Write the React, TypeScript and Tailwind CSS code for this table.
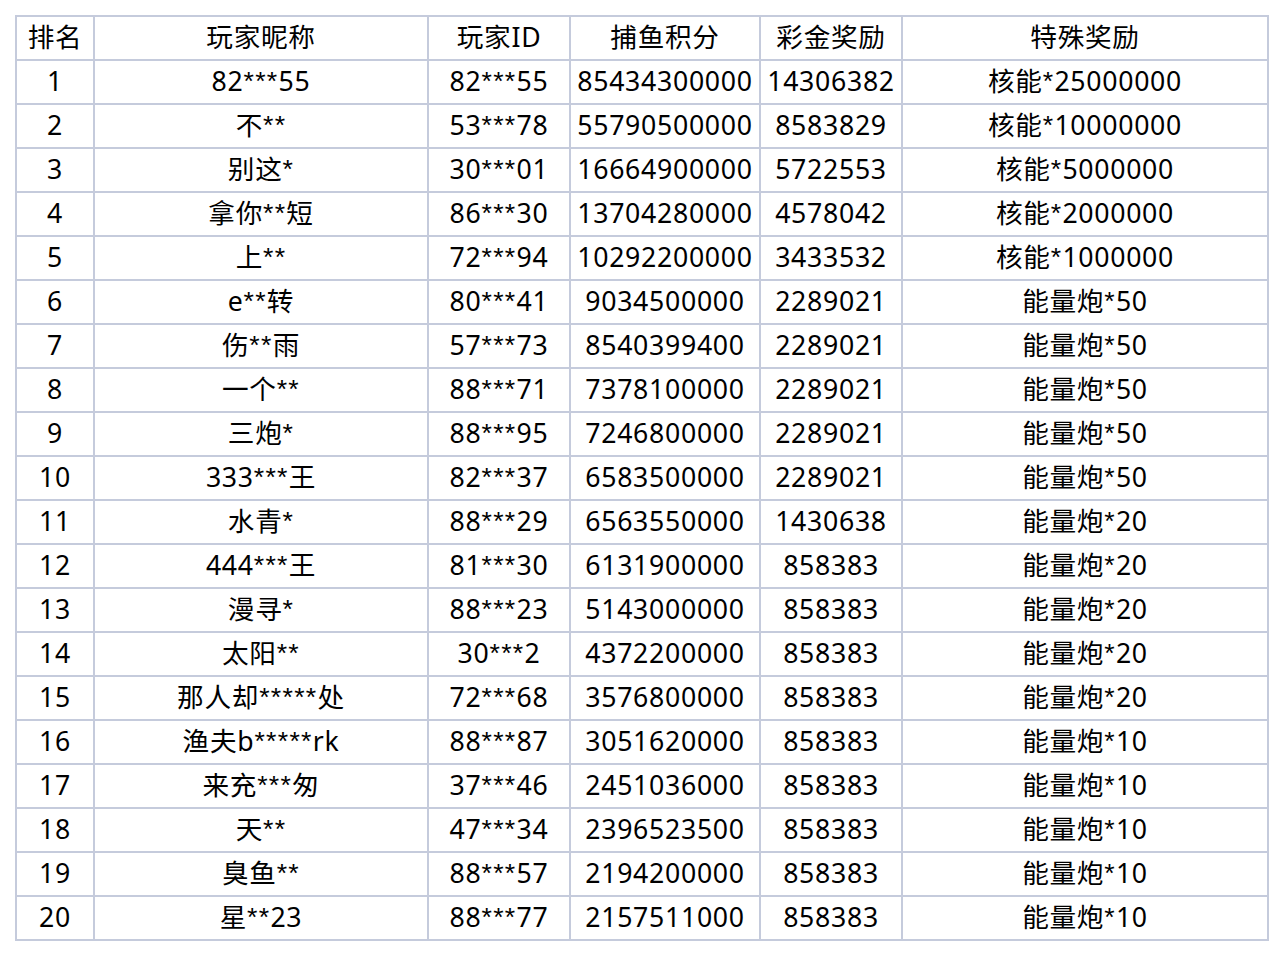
import React from "react";

const headers = ["排名", "玩家昵称", "玩家ID", "捕鱼积分", "彩金奖励", "特殊奖励"];

const rows: string[][] = [
  ["1", "82***55", "82***55", "85434300000", "14306382", "核能*25000000"],
  ["2", "不**", "53***78", "55790500000", "8583829", "核能*10000000"],
  ["3", "别这*", "30***01", "16664900000", "5722553", "核能*5000000"],
  ["4", "拿你**短", "86***30", "13704280000", "4578042", "核能*2000000"],
  ["5", "上**", "72***94", "10292200000", "3433532", "核能*1000000"],
  ["6", "e**转", "80***41", "9034500000", "2289021", "能量炮*50"],
  ["7", "伤**雨", "57***73", "8540399400", "2289021", "能量炮*50"],
  ["8", "一个**", "88***71", "7378100000", "2289021", "能量炮*50"],
  ["9", "三炮*", "88***95", "7246800000", "2289021", "能量炮*50"],
  ["10", "333***王", "82***37", "6583500000", "2289021", "能量炮*50"],
  ["11", "水青*", "88***29", "6563550000", "1430638", "能量炮*20"],
  ["12", "444***王", "81***30", "6131900000", "858383", "能量炮*20"],
  ["13", "漫寻*", "88***23", "5143000000", "858383", "能量炮*20"],
  ["14", "太阳**", "30***2", "4372200000", "858383", "能量炮*20"],
  ["15", "那人却*****处", "72***68", "3576800000", "858383", "能量炮*20"],
  ["16", "渔夫b*****rk", "88***87", "3051620000", "858383", "能量炮*10"],
  ["17", "来充***匆", "37***46", "2451036000", "858383", "能量炮*10"],
  ["18", "天**", "47***34", "2396523500", "858383", "能量炮*10"],
  ["19", "臭鱼**", "88***57", "2194200000", "858383", "能量炮*10"],
  ["20", "星**23", "88***77", "2157511000", "858383", "能量炮*10"],
];

function Cell({ text }: { text: string }) {
  const parts = text.split(/(\*+)/).filter((p) => p.length > 0);
  return (
    <>
      {parts.map((p, k) =>
        p[0] === "*" ? (
          <span
            key={k}
            className="tracking-[1.3px]"
            style={{ fontFamily: '"Liberation Sans", sans-serif' }}
          >
            {p}
          </span>
        ) : (
          <span key={k}>{p}</span>
        )
      )}
    </>
  );
}

export default function App() {
  const all = [headers, ...rows];
  return (
    <div className="w-[1284px] h-[956px] bg-white pt-[15px] pl-[15px]">
      <div
        className="inline-grid grid-cols-[76px_332px_140px_188px_140px_364px] auto-rows-[42px] gap-[2px] p-[2px] bg-[#c5cbdc] text-black text-[26.67px] tracking-[0.7px] leading-none"
        style={{ fontFamily: '"Noto Sans", "Noto Sans CJK SC", sans-serif' }}
      >
        {all.map((r, i) =>
          r.map((c, j) => (
            <div
              key={`${i}-${j}`}
              className="bg-white flex items-center justify-center whitespace-nowrap pb-[2px]"
            >
              <Cell text={c} />
            </div>
          ))
        )}
      </div>
    </div>
  );
}
